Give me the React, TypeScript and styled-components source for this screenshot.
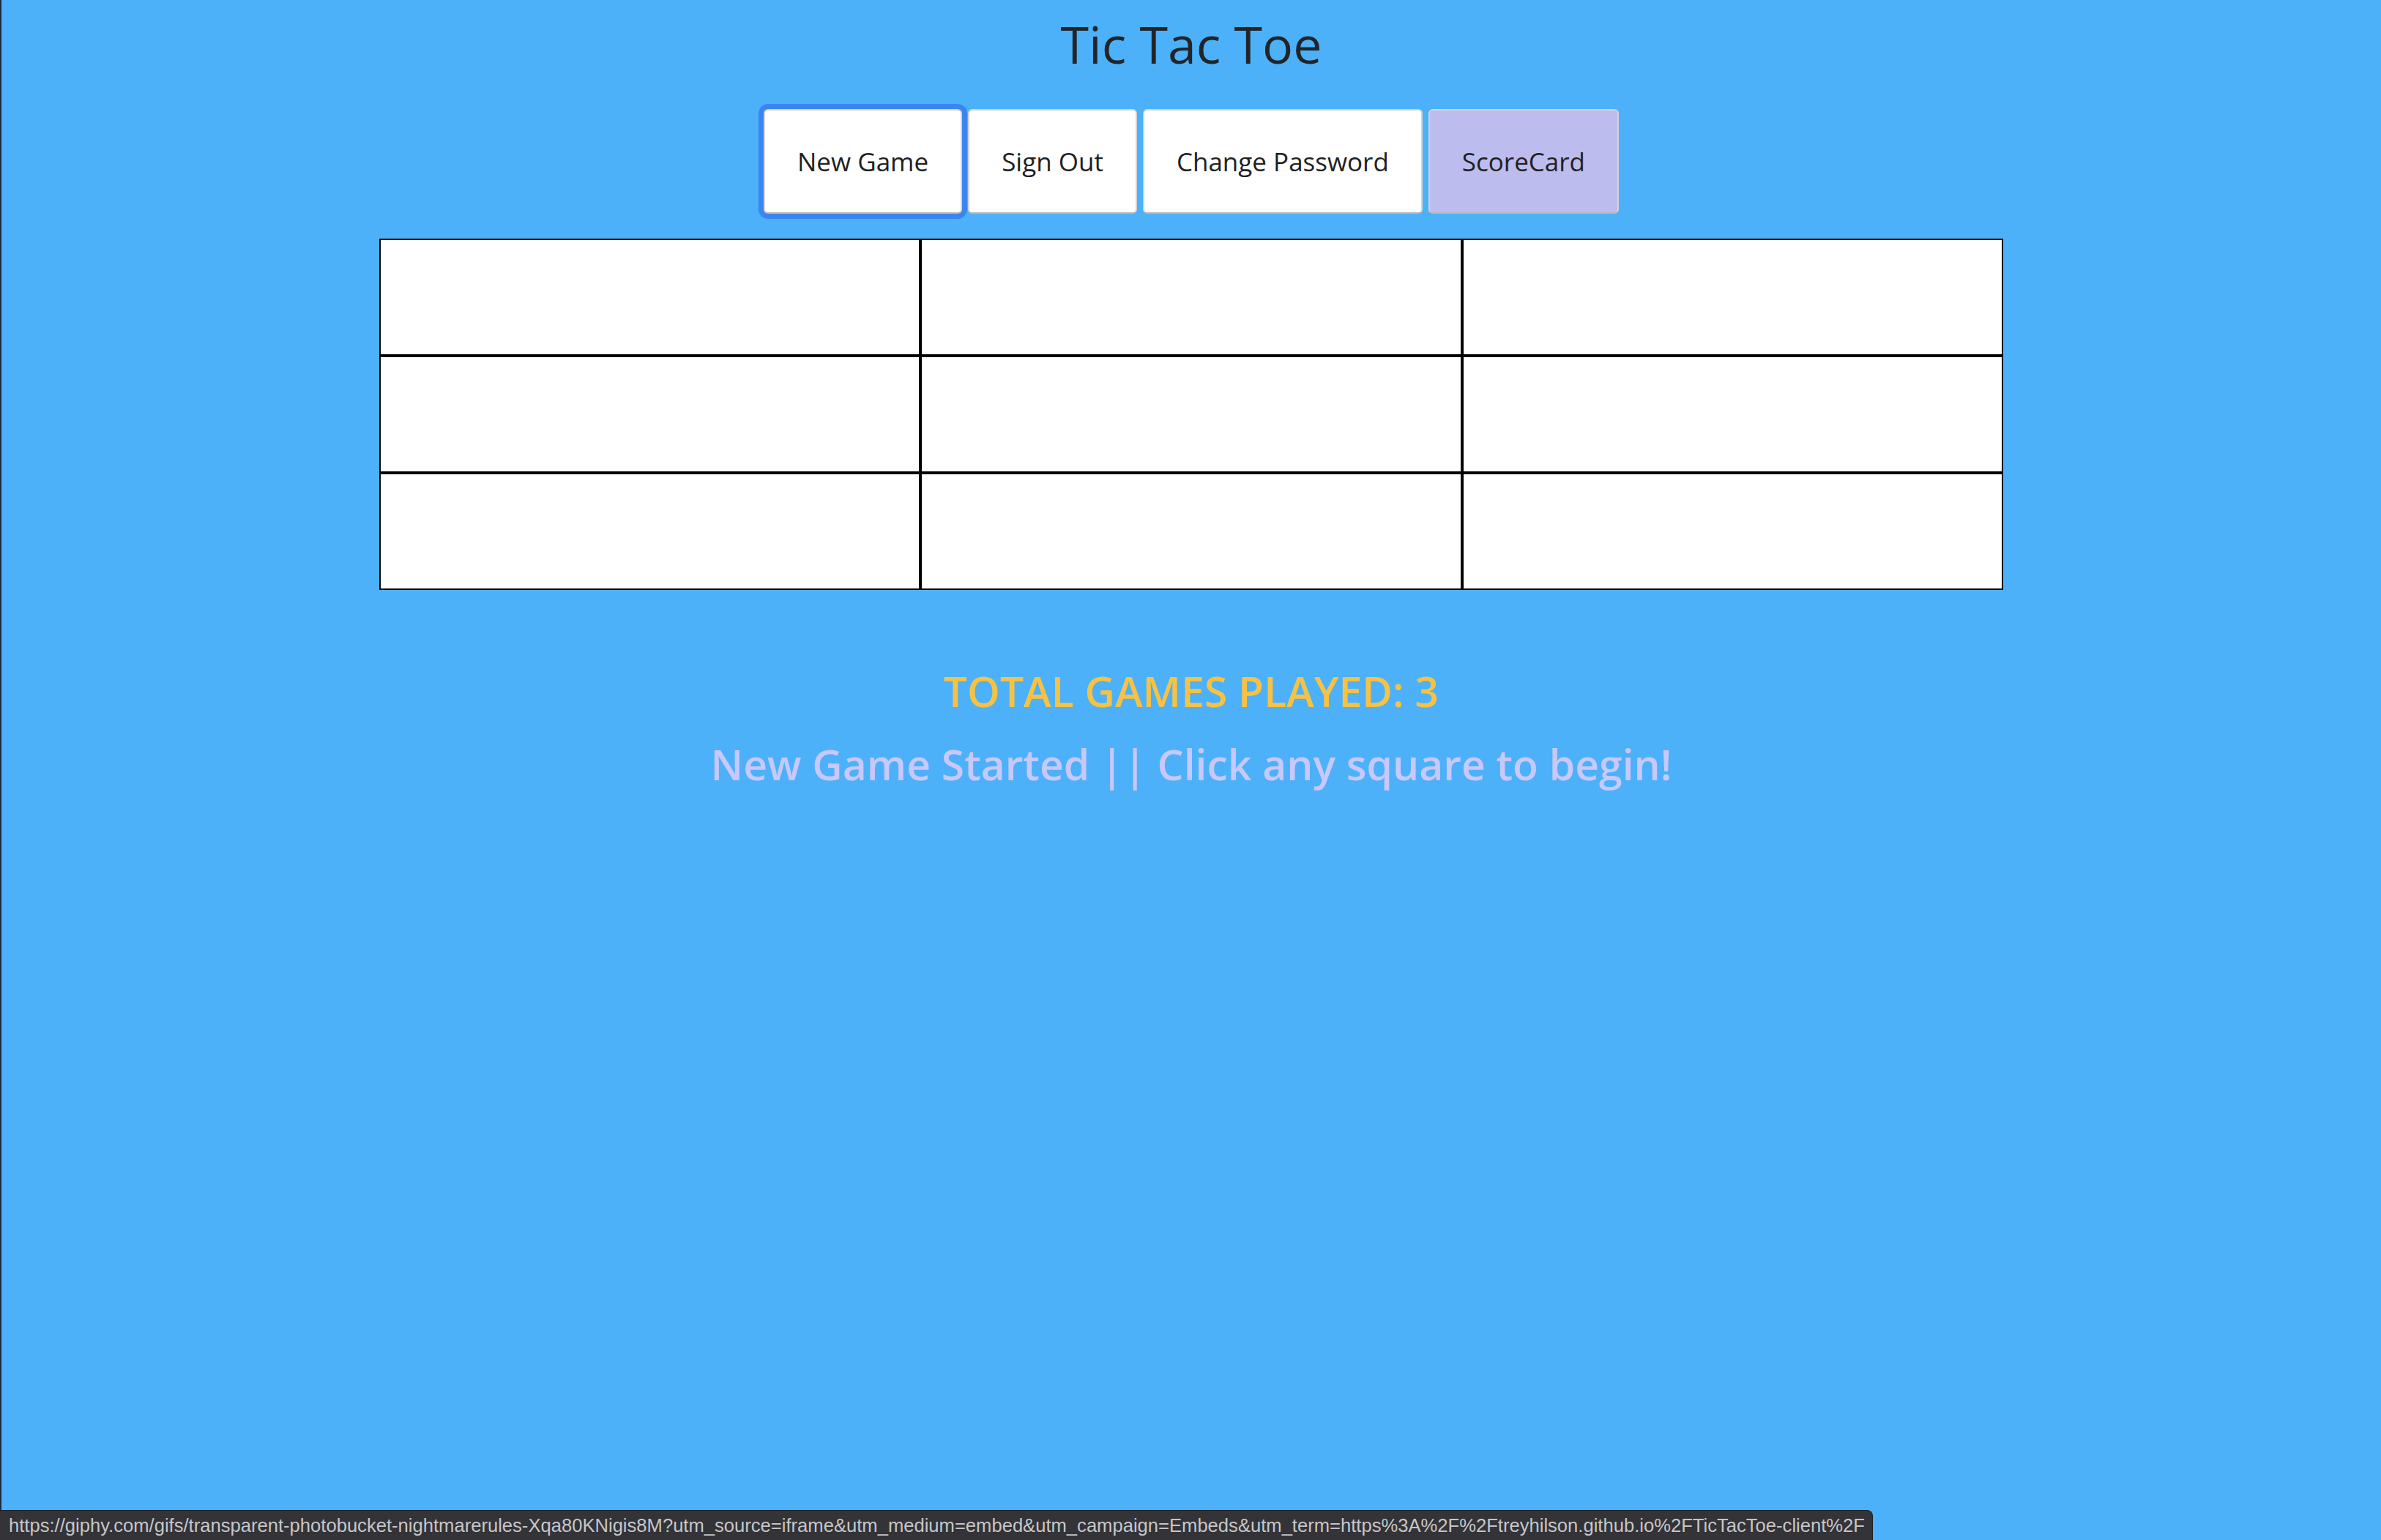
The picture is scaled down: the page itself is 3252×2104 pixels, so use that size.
import React from 'react';
import styled, { createGlobalStyle } from 'styled-components';

const GlobalStyle = createGlobalStyle`
  html, body {
    margin: 0;
    padding: 0;
    height: 100%;
  }
  body {
    background-color: #4db1f9;
    font-family: 'Open Sans', 'Noto Sans', sans-serif;
    color: #212529;
    border-left: 2px solid #1c2c3c;
    box-sizing: border-box;
  }
`;

const buttons = [
  { label: 'New Game', focused: true },
  { label: 'Sign Out' },
  { label: 'Change Password' },
  { label: 'ScoreCard', tinted: true },
];

const App = () => {
  return (
    <Page>
      <GlobalStyle />
      <Title>Tic Tac Toe</Title>
      <ButtonRow>
        {buttons.map((b) => (
          <Button key={b.label} $focused={b.focused} $tinted={b.tinted}>
            {b.label}
          </Button>
        ))}
      </ButtonRow>
      <Board>
        {Array.from({ length: 9 }).map((_, i) => (
          <Cell key={i} />
        ))}
      </Board>
      <GamesPlayed>TOTAL GAMES PLAYED: 3</GamesPlayed>
      <Message>New Game Started || Click any square to begin!</Message>
      <StatusBar>
        https://giphy.com/gifs/transparent-photobucket-nightmarerules-Xqa80KNigis8M?utm_source=iframe&amp;utm_medium=embed&amp;utm_campaign=Embeds&amp;utm_term=https%3A%2F%2Ftreyhilson.github.io%2FTicTacToe-client%2F
      </StatusBar>
    </Page>
  );
};

const Page = styled.div`
  min-height: 2104px;
  display: flex;
  flex-direction: column;
  align-items: center;
`;

const Title = styled.h1`
  margin: 18px 0 0;
  font-size: 70px;
  font-weight: 500;
  line-height: 84px;
  color: #212529;
`;

const ButtonRow = styled.div`
  display: flex;
  gap: 8px;
  margin-top: 47px;
`;

const Button = styled.button<{ $focused?: boolean; $tinted?: boolean }>`
  height: 143px;
  padding: 0 44px;
  font-family: 'Open Sans', 'Noto Sans', sans-serif;
  font-size: 35px;
  color: #212121;
  background-color: ${(p) => (p.$tinted ? '#bcbcee' : '#ffffff')};
  border: 2px solid #d4d4d8;
  border-bottom-color: #b9b9bc;
  border-radius: 6px;
  box-shadow: ${(p) => (p.$focused ? '0 0 0 7px #3a86f0' : 'none')};
  cursor: pointer;
`;

const Board = styled.div`
  width: 2218px;
  margin-top: 34px;
  display: grid;
  grid-template-columns: repeat(3, 1fr);
  grid-auto-rows: 160px;
  background-color: #fff;
`;

const Cell = styled.div`
  box-sizing: border-box;
  border: 2px solid #000;
`;

const GamesPlayed = styled.h2`
  margin: 102px 0 0;
  font-size: 57px;
  font-weight: 600;
  line-height: 72px;
  color: #f7c244;
`;

const Message = styled.h2`
  margin: 28px 0 0;
  font-size: 57px;
  font-weight: 600;
  line-height: 72px;
  color: #c8c8fa;
`;

const StatusBar = styled.div`
  position: fixed;
  left: 0;
  bottom: 0;
  height: 40px;
  padding: 0 10px 0 12px;
  display: flex;
  align-items: center;
  background-color: #333338;
  border-top: 1px solid #1f1f22;
  border-right: 1px solid #1f1f22;
  border-top-right-radius: 8px;
  color: #c6c6c8;
  font-family: 'Liberation Sans', Arial, sans-serif;
  font-size: 25.6px;
  white-space: nowrap;
`;

export default App;
